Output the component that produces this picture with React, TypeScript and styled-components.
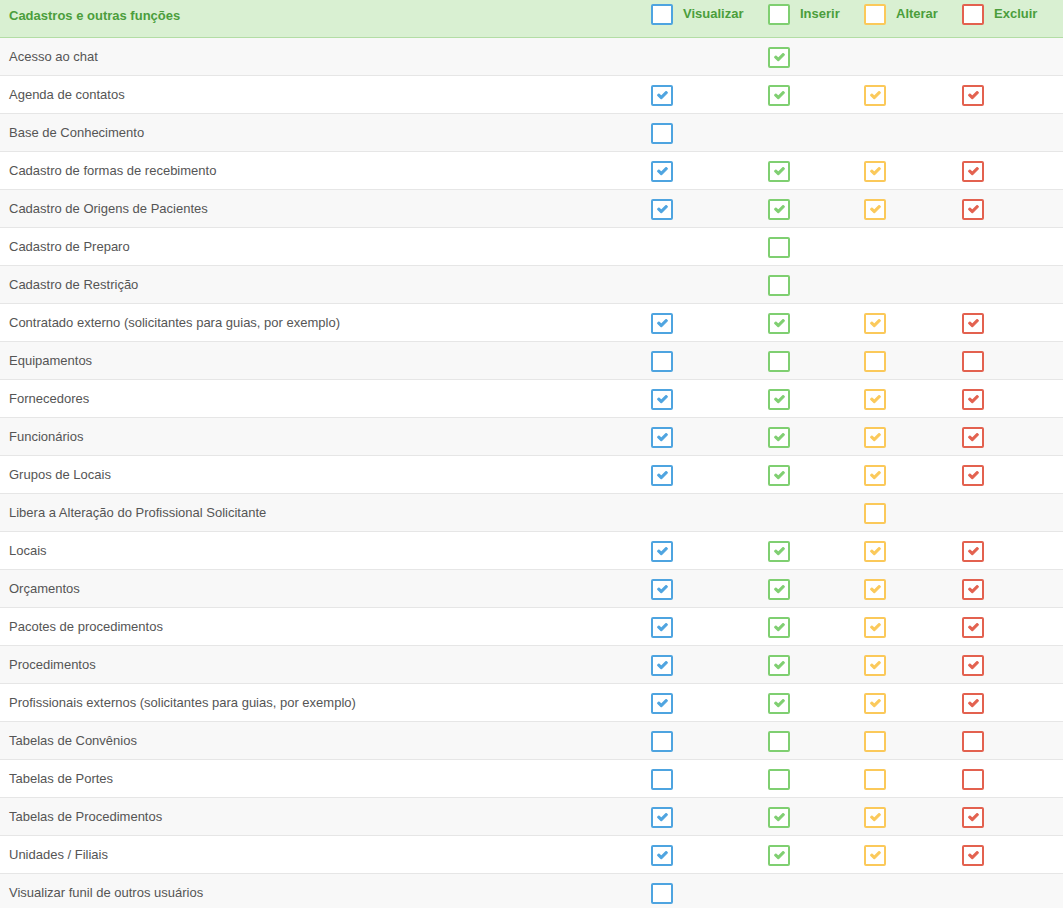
import React from "react";
import styled, { createGlobalStyle } from "styled-components";

const Global = createGlobalStyle`
  html, body { margin: 0; padding: 0; background: #fff; }
  body { font-family: "Liberation Sans", Arial, sans-serif; font-size: 13px; color: #555; }
`;

type Kind = "v" | "i" | "a" | "e";
const COLORS: Record<Kind, string> = {
  v: "#4ea4e0",
  i: "#7fcf71",
  a: "#fbc95a",
  e: "#e3614f",
};

const GRID = "640px 117px 96px 98px 1fr";

const Table = styled.div`
  width: 100%;
`;

const HeaderRow = styled.div`
  display: grid;
  grid-template-columns: ${GRID};
  grid-template-rows: 37px;
  height: 37px;
  background: #d9f0d2;
  border-bottom: 1px solid #b3dda5;
  box-sizing: content-box;
`;

const HeaderCell = styled.div`
  display: flex;
  align-items: flex-start;
  gap: 10px;
  padding: 4px 0 0 11px;
`;

const HeaderTitle = styled.div`
  padding: 8px 0 0 9px;
  font-weight: bold;
  color: #4b9e3c;
  font-size: 13px;
`;

const HeaderLabel = styled.span`
  font-weight: bold;
  color: #4b9e3c;
  line-height: 20px;
`;

const Row = styled.div<{ $striped: boolean }>`
  display: grid;
  grid-template-columns: ${GRID};
  grid-template-rows: 37px;
  align-items: stretch;
  border-bottom: 1px solid #e6e6e6;
  background: ${(p) => (p.$striped ? "#f8f8f8" : "#ffffff")};
`;

const LabelCell = styled.div`
  display: flex;
  align-items: center;
  height: 37px;
  padding-left: 9px;
  box-sizing: border-box;
  color: #555;
`;

const BoxCell = styled.div`
  display: flex;
  align-items: center;
  height: 37px;
  padding-left: 11px;
  padding-top: 1px;
  box-sizing: border-box;
`;

const Box = styled.span<{ $color: string }>`
  box-sizing: border-box;
  width: 22px;
  height: 21px;
  border: 2px solid ${(p) => p.$color};
  border-radius: 2px;
  background: #fff;
  display: inline-flex;
  align-items: center;
  justify-content: center;
  flex: none;
`;

const Check = ({ color }: { color: string }) => (
  <svg width="11" height="10" viewBox="0 0 512 470">
    <path
      fill={color}
      stroke={color}
      strokeWidth={60}
      strokeLinejoin="round"
      d="M173.898 439.404l-166.4-166.4c-9.997-9.997-9.997-26.206 0-36.204l36.203-36.204c9.997-9.998 26.207-9.998 36.204 0L192 312.69 432.095 72.596c9.997-9.997 26.207-9.997 36.204 0l36.203 36.204c9.997 9.997 9.997 26.206 0 36.204l-294.4 294.401c-9.998 9.997-26.207 9.997-36.204-.001z"
      transform="translate(30 18) scale(0.88)"
    />
  </svg>
);

const CheckBox = ({ kind, checked }: { kind: Kind; checked: boolean }) => (
  <Box $color={COLORS[kind]}>{checked && <Check color={COLORS[kind]} />}</Box>
);

type V = boolean | null;
const T = true;
const F = false;
const N = null;
const ALL_T: V[] = [T, T, T, T];
const ALL_F: V[] = [F, F, F, F];

const rows: [string, V[]][] = [
  ["Acesso ao chat", [N, T, N, N]],
  ["Agenda de contatos", ALL_T],
  ["Base de Conhecimento", [F, N, N, N]],
  ["Cadastro de formas de recebimento", ALL_T],
  ["Cadastro de Origens de Pacientes", ALL_T],
  ["Cadastro de Preparo", [N, F, N, N]],
  ["Cadastro de Restrição", [N, F, N, N]],
  ["Contratado externo (solicitantes para guias, por exemplo)", ALL_T],
  ["Equipamentos", ALL_F],
  ["Fornecedores", ALL_T],
  ["Funcionários", ALL_T],
  ["Grupos de Locais", ALL_T],
  ["Libera a Alteração do Profissional Solicitante", [N, N, F, N]],
  ["Locais", ALL_T],
  ["Orçamentos", ALL_T],
  ["Pacotes de procedimentos", ALL_T],
  ["Procedimentos", ALL_T],
  ["Profissionais externos (solicitantes para guias, por exemplo)", ALL_T],
  ["Tabelas de Convênios", ALL_F],
  ["Tabelas de Portes", ALL_F],
  ["Tabelas de Procedimentos", ALL_T],
  ["Unidades / Filiais", ALL_T],
  ["Visualizar funil de outros usuários", [F, N, N, N]],
];

const KINDS: Kind[] = ["v", "i", "a", "e"];
const LABELS = ["Visualizar", "Inserir", "Alterar", "Excluir"];

export default function App() {
  return (
    <>
      <Global />
      <Table>
        <HeaderRow>
          <HeaderTitle>Cadastros e outras funções</HeaderTitle>
          {KINDS.map((k, i) => (
            <HeaderCell key={k}>
              <CheckBox kind={k} checked={false} />
              <HeaderLabel>{LABELS[i]}</HeaderLabel>
            </HeaderCell>
          ))}
          <div />
        </HeaderRow>
        {rows.map(([label, vals], idx) => (
          <Row key={label} $striped={idx % 2 === 0}>
            <LabelCell>{label}</LabelCell>
            {KINDS.map((k, i) => (
              <BoxCell key={k}>
                {vals[i] !== null && <CheckBox kind={k} checked={vals[i] as boolean} />}
              </BoxCell>
            ))}
            <div />
          </Row>
        ))}
      </Table>
    </>
  );
}
